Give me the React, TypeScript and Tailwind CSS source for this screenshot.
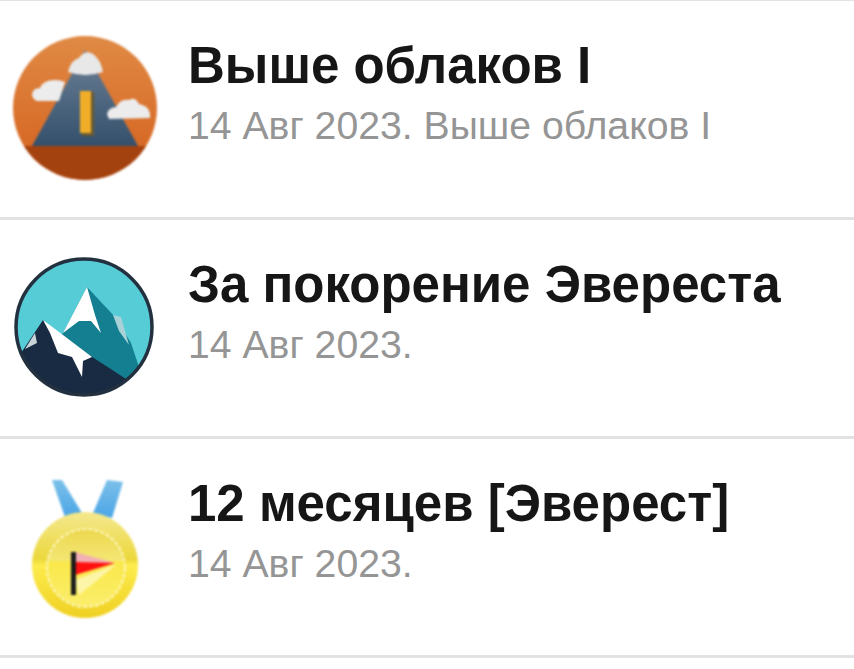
import React from 'react';

const CloudsIcon = () => (
  <svg viewBox="0 0 144 144" className="w-[144px] h-[144px] blur-[1px]">
    <defs>
      <linearGradient id="orange" x1="0" y1="0" x2="0" y2="1">
        <stop offset="0" stopColor="#e08a45" />
        <stop offset="1" stopColor="#d4601c" />
      </linearGradient>
      <linearGradient id="slate" x1="0" y1="0" x2="0" y2="1">
        <stop offset="0" stopColor="#6c8196" />
        <stop offset="1" stopColor="#34506c" />
      </linearGradient>
      <clipPath id="disc"><circle cx="72" cy="72" r="72" /></clipPath>
    </defs>
    <circle cx="72" cy="72" r="72" fill="url(#orange)" />
    <g clipPath="url(#disc)">
      <rect x="0" y="110" width="144" height="34" fill="#a4420f" />
      <path d="M72 14 L125 110 L19 110 Z" fill="url(#slate)" />
      <path d="M55 36 Q58 24 66 22 Q72 13 80 18 Q88 24 90 36 Q72 42 55 36 Z" fill="#e8e8e8" />
      <path d="M19 58 Q20 52 27 52 Q30 44 42 44 Q48 44 52 46 L46 65 L24 65 Q19 63 19 58 Z" fill="#ececec" />
      <path d="M94 78 Q95 72 103 71 Q108 62 116 64 Q122 60 126 68 Q138 70 137 82 L96 83 Z" fill="#ececec" />
      <rect x="69" y="56" width="12" height="44" fill="#6b5a30" />
      <rect x="67" y="55" width="11" height="42" fill="#f0ae28" />
    </g>
  </svg>
);

const EverestIcon = () => (
  <svg viewBox="0 0 144 144" className="w-[144px] h-[144px] blur-[0.7px]">
    <defs>
      <clipPath id="disc2"><circle cx="71" cy="72" r="68" /></clipPath>
    </defs>
    <circle cx="71" cy="72" r="68" fill="#56ccd6" />
    <g clipPath="url(#disc2)">
      <path d="M74 32 L102 62 L118 88 L128 118 L110 126 L40 90 L50 78 Z" fill="#137f90" />
      <path d="M74 32 L62 55 L50 78 L66 66 L78 66 L88 78 L82 60 Z" fill="#ffffff" />
      <path d="M100 60 L108 62 L116 90 L106 76 Z" fill="#a8d2d8" />
      <path d="M30 65 L12 92 L0 110 L0 144 L144 144 L110 122 L50 83 Z" fill="#182b42" />
      <path d="M30 65 L50 80 L79 102 L70 106 L69 122 L59 102 L45 98 L37 78 Z" fill="#ffffff" />
      <path d="M22 78 L12 94 L24 88 Z" fill="#c9d3d8" />
    </g>
    <circle cx="71" cy="72" r="68" fill="none" stroke="#23303f" strokeWidth="3.5" />
  </svg>
);

const MedalIcon = () => (
  <svg viewBox="0 0 144 144" className="w-[144px] h-[144px] blur-[0.8px]">
    <defs>
      <linearGradient id="gold" x1="0" y1="0" x2="0" y2="1">
        <stop offset="0" stopColor="#f4e88e" />
        <stop offset="0.45" stopColor="#ecd83c" />
        <stop offset="0.5" stopColor="#fdec4e" />
        <stop offset="1" stopColor="#efd020" />
      </linearGradient>
      <linearGradient id="inner" x1="0" y1="0" x2="0" y2="1">
        <stop offset="0" stopColor="#ecd84e" />
        <stop offset="0.4" stopColor="#f4e674" />
        <stop offset="0.42" stopColor="#fae84a" />
        <stop offset="1" stopColor="#fbee6c" />
      </linearGradient>
      <linearGradient id="ribbon" x1="0" y1="0" x2="0" y2="1">
        <stop offset="0" stopColor="#7cc0ea" />
        <stop offset="1" stopColor="#4ba6e6" />
      </linearGradient>
    </defs>
    <path d="M39 6 L49 6 L69 39 L52 43 Z" fill="url(#ribbon)" />
    <path d="M94 6 L110 8 L99 44 L80 39 Z" fill="url(#ribbon)" />
    <circle cx="72" cy="91" r="53" fill="url(#gold)" />
    <circle cx="73" cy="94" r="39" fill="url(#inner)" stroke="#fff6c0" strokeWidth="2" strokeDasharray="4 2" />
    <path d="M62 106 L104 90 L66 121 Z" fill="#fdf6a8" />
    <path d="M62 78 L102 89 L62 90 Z" fill="#f3b0b4" />
    <path d="M62 88 L102 89 L62 101 Z" fill="#ff1010" />
    <rect x="58" y="78" width="5" height="43" fill="#1b1b1b" />
  </svg>
);

const achievements = [
  { title: 'Выше облаков I', note: '14 Авг 2023. Выше облаков I', icon: <CloudsIcon /> },
  { title: 'За покорение Эвереста', note: '14 Авг 2023.', icon: <EverestIcon /> },
  { title: '12 месяцев [Эверест]', note: '14 Авг 2023.', icon: <MedalIcon /> },
];

export default function App() {
  return (
    <div className="min-h-[669px] bg-white font-['Liberation_Sans',Arial,sans-serif] border-t border-[#e2e2e2]">
      {achievements.map((item) => (
        <div key={item.title} className="h-[219px] flex items-start border-b-[3px] border-[#e2e2e2]">
          <div className="w-[144px] h-[144px] ml-[13px] mt-[35px] shrink-0">{item.icon}</div>
          <div className="ml-[31px] mt-[36px]">
            <div className="text-[51px] leading-[58px] font-bold text-[#161616]">{item.title}</div>
            <div className="mt-[9px] text-[39.2px] leading-[44px] text-[#959595]">{item.note}</div>
          </div>
        </div>
      ))}
    </div>
  );
}
